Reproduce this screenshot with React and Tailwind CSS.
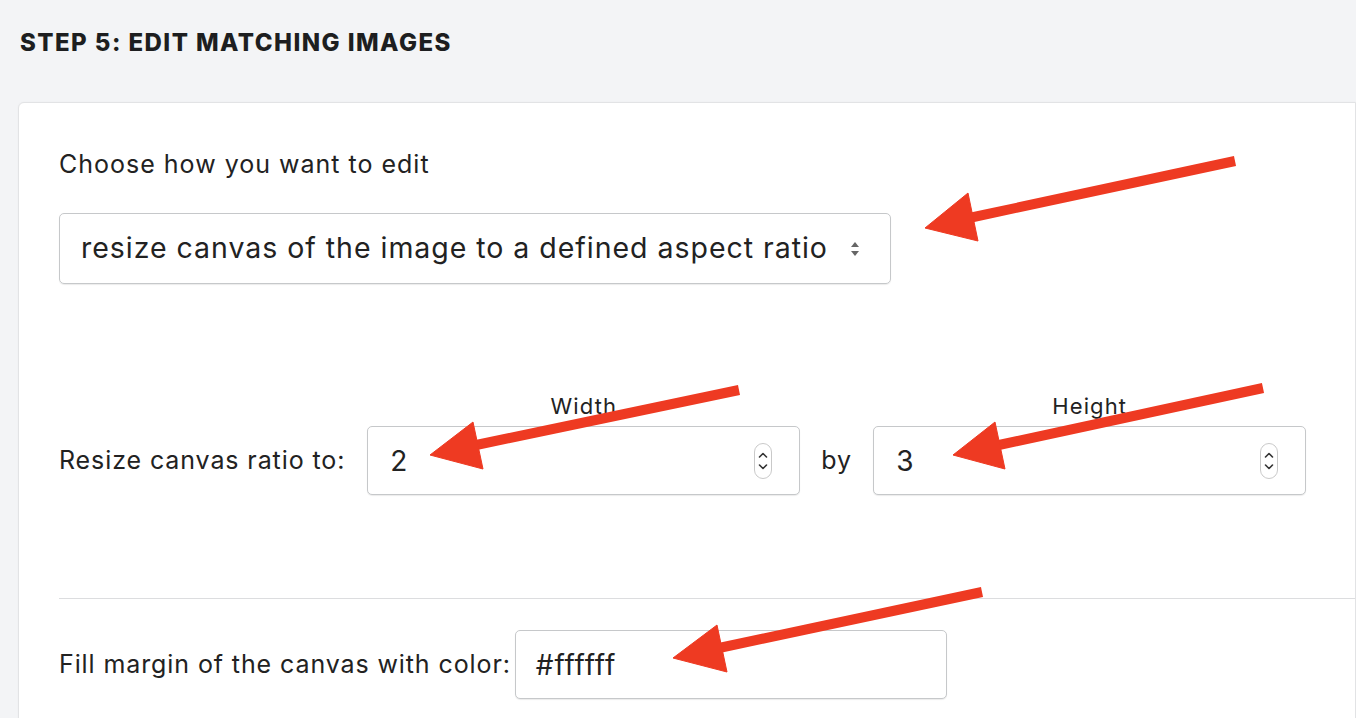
import React from "react";

function Spinner() {
  return (
    <svg width="18" height="36" viewBox="0 0 18 36" className="shrink-0">
      <rect x="0.5" y="0.5" width="17" height="35" rx="8.5" fill="#fff" stroke="#c9c9c9" />
      <path d="M5.5 14 L9 10.5 L12.5 14" fill="none" stroke="#333" strokeWidth="1.6" strokeLinecap="round" strokeLinejoin="round" />
      <path d="M5.5 22 L9 25.5 L12.5 22" fill="none" stroke="#333" strokeWidth="1.6" strokeLinecap="round" strokeLinejoin="round" />
    </svg>
  );
}

function SelectCaret() {
  return (
    <svg width="12" height="18" viewBox="0 0 12 18" className="shrink-0">
      <path d="M6 2 L10 7 L2 7 Z" fill="#666" />
      <path d="M6 16 L10 11 L2 11 Z" fill="#666" />
    </svg>
  );
}

function NumberBox({ value }) {
  return (
    <div className="w-[433px] h-[69px] flex items-center justify-between pl-[22px] pr-[27px] bg-white border border-[#c6c8ca] rounded-[5px] shadow-[0_1px_1px_rgba(0,0,0,0.08)] text-[28px] text-[#222]">
      <span>{value}</span>
      <Spinner />
    </div>
  );
}

// annotation arrows drawn over the form
const arrows = [
  { line: [1235, 161, 955, 221], head: "925,228 968,193 978,241" },
  { line: [739, 390, 462, 448], head: "430,455 473,422 483,469" },
  { line: [1263, 388, 985, 448], head: "953,455 995,422 1005,469" },
  { line: [982, 592, 705, 651], head: "673,658 717,625 727,672" },
];

export default function App() {
  return (
    <div className="relative min-h-screen h-[718px] overflow-hidden bg-[#f3f4f6] font-['Inter',sans-serif] text-[#222]">
      <h2 className="pl-5 pt-[29px] text-[24px] leading-[28px] font-extrabold tracking-[0.06em] text-[#1d1e20]">
        STEP 5: EDIT MATCHING IMAGES
      </h2>

      <div className="ml-[18px] mt-[45px] bg-white border border-[#e2e3e5] rounded-tl-md pl-10 pt-[46px] pb-10 shadow-[0_0_2px_rgba(0,0,0,0.04)]">
        <div className="text-[25px] leading-[30px] tracking-[0.04em]">Choose how you want to edit</div>

        <div className="mt-[34px] w-[832px] h-[71px] flex items-center justify-between pl-[21px] pr-[29px] border border-[#c6c8ca] rounded-[5px] shadow-[0_1px_1px_rgba(0,0,0,0.08)] text-[28.5px] tracking-[0.034em]">
          <span>resize canvas of the image to a defined aspect ratio</span>
          <SelectCaret />
        </div>

        <div className="mt-[110px] flex items-end">
          <div className="h-[69px] flex items-center text-[25px] tracking-[0.036em] mr-[22px]">Resize canvas ratio to:</div>
          <div className="flex flex-col items-center">
            <div className="text-[22px] leading-[24px] tracking-[0.05em] mb-[8px]">Width</div>
            <NumberBox value="2" />
          </div>
          <div className="h-[69px] flex items-center text-[25px] tracking-[0.04em] mx-[21px]">by</div>
          <div className="flex flex-col items-center">
            <div className="text-[22px] leading-[24px] tracking-[0.05em] mb-[8px]">Height</div>
            <NumberBox value="3" />
          </div>
        </div>

        <div className="mt-[103px] border-t border-[#dcdddf]" />

        <div className="mt-[31px] flex items-center">
          <div className="text-[25px] tracking-[0.036em] mr-[4px]">Fill margin of the canvas with color:</div>
          <div className="w-[432px] h-[69px] flex items-center pl-[20px] bg-white border border-[#c6c8ca] rounded-[5px] shadow-[0_1px_1px_rgba(0,0,0,0.08)] text-[28px] tracking-[0.03em]">
            #ffffff
          </div>
        </div>
      </div>

      <svg className="absolute inset-0 pointer-events-none" width="1356" height="718" viewBox="0 0 1356 718">
        {arrows.map((a, i) => (
          <g key={i} fill="#ee3a22" stroke="#ee3a22">
            <line x1={a.line[0]} y1={a.line[1]} x2={a.line[2]} y2={a.line[3]} strokeWidth="10" />
            <polygon points={a.head} strokeWidth="1" strokeLinejoin="round" />
          </g>
        ))}
      </svg>
    </div>
  );
}
